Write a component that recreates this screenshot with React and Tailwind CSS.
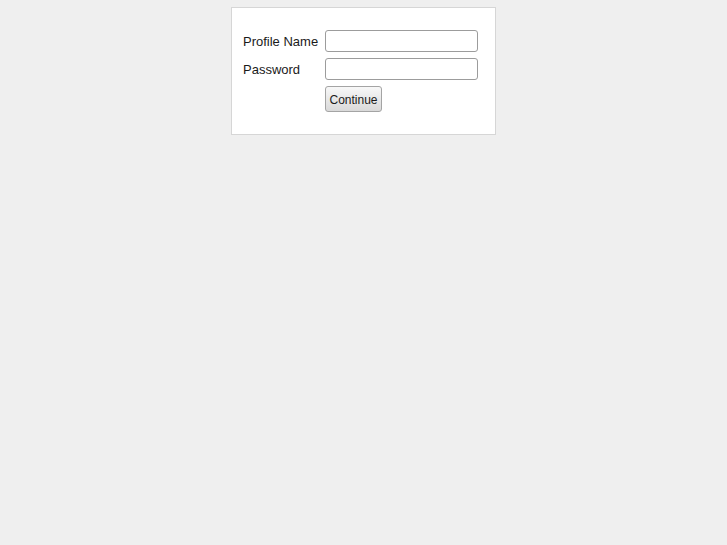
export default function App() {
  return (
    <div className="min-h-[545px] bg-[#efefef] pt-[7px]" style={{ fontFamily: '"Liberation Sans", Arial, sans-serif' }}>
      <div className="mx-auto w-[265px] border border-[#d6d6d6] bg-white px-[11px] pt-[22px] pb-[22px] text-[13px] text-[#1a1a1a]">
        <div className="flex flex-col gap-[6px]">
          <div className="flex items-center">
            <label className="w-[82px] shrink-0 pt-[1px]">Profile Name</label>
            <input type="text" className="h-[22px] w-[153px] rounded-[3px] border border-[#9c9c9c] bg-white outline-none" />
          </div>
          <div className="flex items-center">
            <label className="w-[82px] shrink-0 pt-[1px]">Password</label>
            <input type="password" className="h-[22px] w-[153px] rounded-[3px] border border-[#9c9c9c] bg-white outline-none" />
          </div>
          <div className="flex items-center">
            <div className="w-[82px] shrink-0" />
            <button className="h-[26px] w-[57px] rounded-[3px] border border-[#a4a4a4] bg-gradient-to-b from-[#f8f8f8] to-[#d9d9d9] pt-[1px] text-[12px] text-[#1a1a1a]">
              Continue
            </button>
          </div>
        </div>
      </div>
    </div>
  );
}
